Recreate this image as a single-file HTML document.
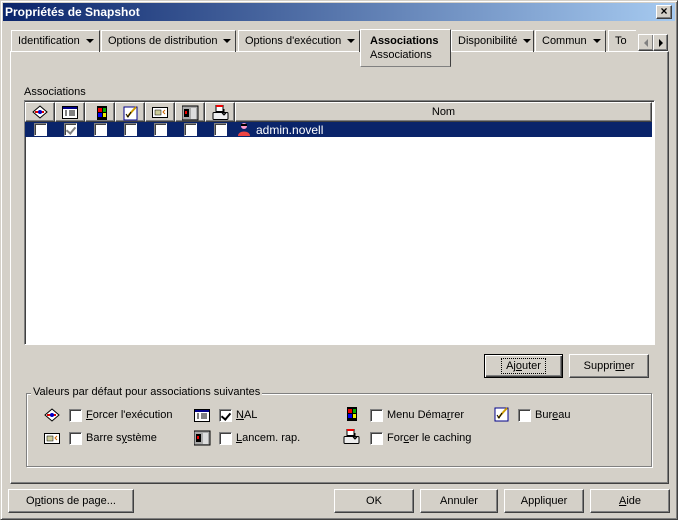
<!DOCTYPE html>
<html><head><meta charset="utf-8"><style>
*{box-sizing:border-box}
body{margin:0;width:678px;height:520px;background:#d4d0c8;font-family:"Liberation Sans",sans-serif;font-size:11px;color:#000;position:relative;overflow:hidden}
.a{position:absolute}
.out{border-top:1px solid #fff;border-left:1px solid #fff;border-right:1px solid #404040;border-bottom:1px solid #404040;box-shadow:inset -1px -1px 0 #808080}
.btn{position:absolute;height:24px;text-align:center;line-height:22px;background:#d4d0c8}
.cb{position:absolute;width:13px;height:13px;background:#fff;border-top:1px solid #808080;border-left:1px solid #808080;border-right:1px solid #fff;border-bottom:1px solid #fff;box-shadow:inset 1px 1px 0 #404040}
.cb.k::after{content:"";position:absolute;left:3px;top:1px;width:4px;height:7px;border-right:2px solid #000;border-bottom:2px solid #000;transform:rotate(40deg)}
.cb.g::after{border-color:#808080}
.tab{position:absolute;top:30px;height:22px;border-top:1px solid #fff;border-left:1px solid #fff;border-right:1px solid #404040;line-height:20px;padding-left:6px;white-space:nowrap}
.arr{display:inline-block;width:0;height:0;border-left:4px solid transparent;border-right:4px solid transparent;border-top:4px solid #000;vertical-align:middle;margin-left:6px}
.hd{position:absolute;top:102px;height:20px;width:30px}
u{text-decoration:underline}
</style></head><body>
<div class="a" style="left:0;top:0;width:678px;height:520px;border-top:1px solid #d4d0c8;border-left:1px solid #d4d0c8;border-right:1px solid #404040;border-bottom:1px solid #404040;box-shadow:inset 1px 1px 0 #fff,inset -1px -1px 0 #808080"></div>
<div class="a" style="left:3px;top:3px;width:672px;height:18px;background:linear-gradient(to right,#0a246a,#a6caf0)"></div>
<div class="a" style="left:5px;top:4px;color:#fff;font-weight:bold;font-size:12px;line-height:16px">Propriétés de Snapshot</div>
<div class="a out" style="left:656px;top:5px;width:16px;height:14px;background:#d4d0c8;font-size:12px;font-weight:bold;line-height:11px;text-align:center">×</div>

<div class="a" style="left:10px;top:51px;width:659px;height:433px;border-top:1px solid #fff;border-left:1px solid #fff;border-right:1px solid #404040;border-bottom:1px solid #404040;box-shadow:inset -1px -1px 0 #808080"></div>
<div class="tab" style="left:11px;width:89px">Identification<span class="arr"></span></div>
<div class="tab" style="left:101px;width:135px">Options de distribution<span class="arr"></span></div>
<div class="tab" style="left:238px;width:122px">Options d'exécution<span class="arr"></span></div>
<div class="tab" style="left:451px;width:83px">Disponibilité<span class="arr"></span></div>
<div class="tab" style="left:535px;width:71px">Commun<span class="arr"></span></div>
<div class="tab" style="left:608px;width:28px;border-right:none;overflow:hidden">To</div>
<div class="a" style="left:360px;top:29px;width:91px;height:38px;background:#d4d0c8;border-top:1px solid #fff;border-left:1px solid #fff;border-right:1px solid #404040;border-bottom:1px solid #808080;padding-left:9px;line-height:14px;padding-top:4px"><b>Associations</b><br>Associations</div>
<div class="a out" style="left:638px;top:34px;width:16px;height:17px;background:#d4d0c8"><div class="a" style="left:5px;top:4px;border-right:4px solid #808080;border-top:4px solid transparent;border-bottom:4px solid transparent"></div></div>
<div class="a out" style="left:653px;top:34px;width:15px;height:17px;background:#d4d0c8"><div class="a" style="left:5px;top:4px;border-left:4px solid #000;border-top:4px solid transparent;border-bottom:4px solid transparent"></div></div>

<div class="a" style="left:24px;top:86px">Associations</div>
<div class="a" style="left:24px;top:100px;width:631px;height:245px;background:#fff;border-top:1px solid #808080;border-left:1px solid #808080;border-right:1px solid #fff;border-bottom:1px solid #fff;box-shadow:inset 1px 1px 0 #404040"></div>
<div class="hd out" style="left:25px;background:#d4d0c8"><svg class="a" style="left:6px;top:2px" width="16" height="14"><path d="M8 1L15 7L8 13L1 7Z" fill="#fff" stroke="#000"/><path d="M3 7H12" stroke="#d00" stroke-width="2"/><circle cx="8" cy="7" r="2" fill="#00c"/></svg></div>
<div class="hd out" style="left:55px;background:#d4d0c8"><svg class="a" style="left:6px;top:3px" width="16" height="14"><rect x="0.5" y="0.5" width="15" height="12" fill="#fff" stroke="#000"/><rect x="1" y="1" width="14" height="2" fill="#008"/><path d="M3 5h2M3 7h2M3 9h2M7 5h6M7 7h6M7 9h6" stroke="#000"/></svg></div>
<div class="hd out" style="left:85px;background:#d4d0c8"><svg class="a" style="left:7px;top:2px" width="16" height="16"><rect x="4" y="1" width="10" height="14" fill="#000"/><rect x="5" y="3" width="4" height="4" fill="#e00"/><rect x="10" y="3" width="3" height="4" fill="#0a0"/><rect x="5" y="8" width="4" height="4" fill="#00e"/><rect x="10" y="8" width="3" height="4" fill="#ee0"/></svg></div>
<div class="hd out" style="left:115px;background:#d4d0c8"><svg class="a" style="left:7px;top:2px" width="16" height="16"><rect x="1" y="2" width="13" height="13" fill="#fff" stroke="#008"/><path d="M4 12L13 2" stroke="#c90" stroke-width="2"/><path d="M3 9l2 3 3-5" stroke="#000" fill="none"/></svg></div>
<div class="hd out" style="left:145px;background:#d4d0c8"><svg class="a" style="left:6px;top:4px" width="17" height="12"><rect x="0.5" y="0.5" width="15" height="10" fill="#fff" stroke="#000"/><rect x="3" y="3" width="6" height="5" fill="#cc9" stroke="#000" stroke-width=".5"/><path d="M13 3l-2 2 2 2" stroke="#c60" fill="none"/></svg></div>
<div class="hd out" style="left:175px;background:#d4d0c8"><svg class="a" style="left:6px;top:2px" width="17" height="16"><rect x="0" y="1" width="16" height="14" fill="#aaa" stroke="#000"/><rect x="2" y="4" width="5" height="8" fill="#000"/><rect x="3" y="6" width="2" height="3" fill="#e00"/><rect x="9" y="3" width="5" height="11" fill="#ddd"/></svg></div>
<div class="hd out" style="left:205px;background:#d4d0c8"><svg class="a" style="left:6px;top:2px" width="18" height="16"><rect x="4" y="0.5" width="7" height="6" fill="#fff" stroke="#000"/><rect x="4" y="0" width="7" height="2" fill="#e00"/><rect x="1" y="7.5" width="15" height="7" rx="1" fill="#eee" stroke="#000"/><path d="M12 4v6M10 8l2 2 2-2" stroke="#000" fill="none"/></svg></div>
<div class="hd out" style="left:235px;width:417px;background:#d4d0c8;text-align:center;line-height:18px">Nom</div>
<div class="a" style="left:25px;top:122px;width:627px;height:15px;background:#0a246a"></div>
<div class="cb" style="left:34px;top:123px"></div>
<div class="cb k g" style="left:64px;top:123px"></div>
<div class="cb" style="left:94px;top:123px"></div>
<div class="cb" style="left:124px;top:123px"></div>
<div class="cb" style="left:154px;top:123px"></div>
<div class="cb" style="left:184px;top:123px"></div>
<div class="cb" style="left:214px;top:123px"></div>
<svg class="a" style="left:237px;top:122px" width="15" height="15"><circle cx="7" cy="4" r="3" fill="#f9c"/><path d="M4 3h6" stroke="#000" stroke-width="2"/><path d="M1 14c0-6 12-6 12 0z" fill="#e44"/></svg>
<div class="a" style="left:256px;top:123px;color:#fff;font-size:12px;line-height:14px">admin.novell</div>

<div class="btn" style="left:484px;top:354px;width:79px;border:1px solid #000;box-shadow:inset 1px 1px 0 #fff,inset -1px -1px 0 #404040,inset -2px -2px 0 #808080"><span style="outline:1px dotted #000;outline-offset:1px;padding:0 3px">Aj<u>o</u>uter</span></div>
<div class="btn out" style="left:569px;top:354px;width:80px">Suppri<u>m</u>er</div>

<div class="a" style="left:26px;top:393px;width:626px;height:74px;border:1px solid #808080;box-shadow:1px 1px 0 #fff,inset 1px 1px 0 #fff"></div>
<div class="a" style="left:31px;top:386px;background:#d4d0c8;padding:0 2px">Valeurs par défaut pour associations suivantes</div>

<svg class="a" style="left:44px;top:408px" width="16" height="14"><path d="M8 1L15 7L8 13L1 7Z" fill="#fff" stroke="#000"/><path d="M3 7H12" stroke="#d00" stroke-width="2"/><circle cx="8" cy="7" r="2" fill="#00c"/></svg>
<div class="cb" style="left:69px;top:409px"></div><div class="a" style="left:86px;top:409px"><u>F</u>orcer l'exécution</div>
<svg class="a" style="left:194px;top:409px" width="16" height="14"><rect x="0.5" y="0.5" width="15" height="12" fill="#fff" stroke="#000"/><rect x="1" y="1" width="14" height="2" fill="#008"/><path d="M3 5h2M3 7h2M3 9h2M7 5h6M7 7h6M7 9h6" stroke="#000"/></svg>
<div class="cb k" style="left:219px;top:409px"></div><div class="a" style="left:236px;top:409px"><u>N</u>AL</div>
<svg class="a" style="left:343px;top:406px" width="16" height="16"><rect x="4" y="1" width="10" height="14" fill="#000"/><rect x="5" y="3" width="4" height="4" fill="#e00"/><rect x="10" y="3" width="3" height="4" fill="#0a0"/><rect x="5" y="8" width="4" height="4" fill="#00e"/><rect x="10" y="8" width="3" height="4" fill="#ee0"/></svg>
<div class="cb" style="left:370px;top:409px"></div><div class="a" style="left:387px;top:409px">Menu Déma<u>r</u>rer</div>
<svg class="a" style="left:494px;top:406px" width="16" height="16"><rect x="1" y="2" width="13" height="13" fill="#fff" stroke="#008"/><path d="M4 12L13 2" stroke="#c90" stroke-width="2"/><path d="M3 9l2 3 3-5" stroke="#000" fill="none"/></svg>
<div class="cb" style="left:518px;top:409px"></div><div class="a" style="left:535px;top:409px">Bur<u>e</u>au</div>

<svg class="a" style="left:44px;top:433px" width="17" height="12"><rect x="0.5" y="0.5" width="15" height="10" fill="#fff" stroke="#000"/><rect x="3" y="3" width="6" height="5" fill="#cc9" stroke="#000" stroke-width=".5"/><path d="M13 3l-2 2 2 2" stroke="#c60" fill="none"/></svg>
<div class="cb" style="left:69px;top:432px"></div><div class="a" style="left:86px;top:432px">Barre s<u>y</u>stème</div>
<svg class="a" style="left:194px;top:430px" width="17" height="16"><rect x="0" y="1" width="16" height="14" fill="#aaa" stroke="#000"/><rect x="2" y="4" width="5" height="8" fill="#000"/><rect x="3" y="6" width="2" height="3" fill="#e00"/><rect x="9" y="3" width="5" height="11" fill="#ddd"/></svg>
<div class="cb" style="left:219px;top:432px"></div><div class="a" style="left:236px;top:432px"><u>L</u>ancem. rap.</div>
<svg class="a" style="left:343px;top:429px" width="18" height="16"><rect x="4" y="0.5" width="7" height="6" fill="#fff" stroke="#000"/><rect x="4" y="0" width="7" height="2" fill="#e00"/><rect x="1" y="7.5" width="15" height="7" rx="1" fill="#eee" stroke="#000"/><path d="M12 4v6M10 8l2 2 2-2" stroke="#000" fill="none"/></svg>
<div class="cb" style="left:370px;top:432px"></div><div class="a" style="left:387px;top:432px">For<u>c</u>er le caching</div>

<div class="btn out" style="left:8px;top:489px;width:126px">O<u>p</u>tions de page...</div>
<div class="btn out" style="left:334px;top:489px;width:80px">OK</div>
<div class="btn out" style="left:420px;top:489px;width:78px">Annuler</div>
<div class="btn out" style="left:504px;top:489px;width:80px">Appliquer</div>
<div class="btn out" style="left:590px;top:489px;width:80px"><u>A</u>ide</div>
</body></html>
